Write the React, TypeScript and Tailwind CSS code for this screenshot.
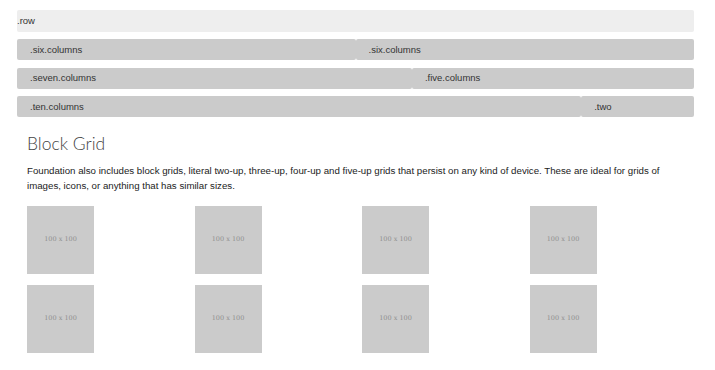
const SANS = 'font-["Liberation_Sans",Arial,sans-serif]'

// ── Grid demo bars ────────────────────────────────────────────

type Col = { label: string; span: number }

const ROWS: Col[][] = [
  [
    { label: '.six.columns', span: 6 },
    { label: '.six.columns', span: 6 },
  ],
  [
    { label: '.seven.columns', span: 7 },
    { label: '.five.columns', span: 5 },
  ],
  [
    { label: '.ten.columns', span: 10 },
    { label: '.two', span: 2 },
  ],
]

const SPAN_CLASS: Record<number, string> = {
  2: 'col-span-2',
  5: 'col-span-5',
  6: 'col-span-6',
  7: 'col-span-7',
  10: 'col-span-10',
}

function GridRow({ cols }: { cols: Col[] }) {
  return (
    <div className="grid grid-cols-12 h-[21px]">
      {cols.map((c, i) => (
        <div
          key={i}
          className={`${SPAN_CLASS[c.span]} flex items-center bg-[#cbcbcb] rounded-[2px] pl-[13px] text-[9.5px] text-[#333]`}
        >
          {c.label}
        </div>
      ))}
    </div>
  )
}

function Placeholder() {
  return (
    <div className="w-[67px] h-[68px] bg-[#cbcbcb] flex items-center justify-center">
      <span className='font-["DejaVu_Serif",serif] text-[6.5px] text-[#8f8f8f]'>100 x 100</span>
    </div>
  )
}

// ── Component ─────────────────────────────────────────────────

export default function App() {
  return (
    <div className={`w-[715px] h-[370px] bg-white overflow-hidden ${SANS}`}>
      <div className="w-[677px] ml-[17px] pt-[10px] flex flex-col gap-[7.4px]">
        <div className="h-[22px] bg-[#eeeeee] rounded-[2px] flex items-center text-[9.5px] text-[#333]">
          .row
        </div>
        {ROWS.map((cols, i) => (
          <GridRow key={i} cols={cols} />
        ))}
      </div>

      <div className="ml-[27px] mt-[14px]">
        <h3 className='font-["Lato",sans-serif] font-light text-[17.5px] leading-[26px] text-[#444]'>
          Block Grid
        </h3>
        <p className="mt-[6px] w-[645px] text-[9.7px] leading-[15px] text-[#222]">
          Foundation also includes block grids, literal two-up, three-up, four-up and five-up grids
          that persist on any kind of device. These are ideal for grids of images, icons, or
          anything that has similar sizes.
        </p>
        <div className="mt-[13px] grid grid-cols-4 w-[670px] gap-y-[11px]">
          {Array.from({ length: 8 }).map((_, i) => (
            <Placeholder key={i} />
          ))}
        </div>
      </div>
    </div>
  )
}
